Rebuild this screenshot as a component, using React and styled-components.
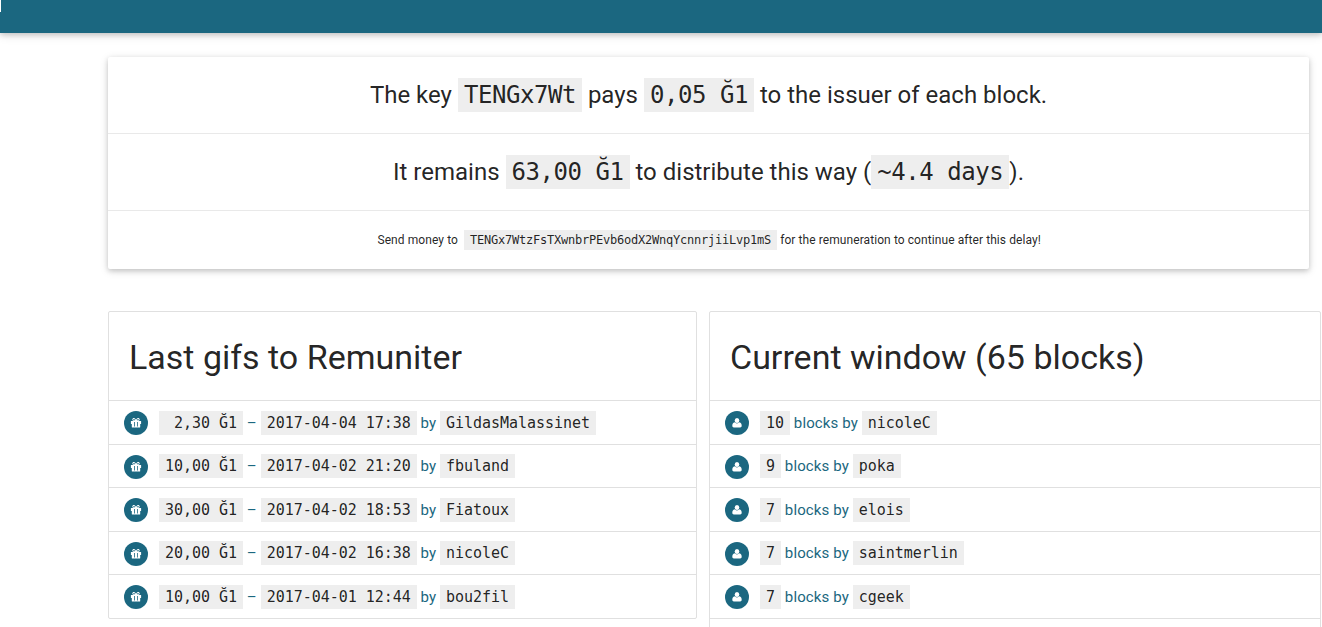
import React from "react";
import styled, { createGlobalStyle } from "styled-components";

const TEAL = "#1b6780";
const SHADOW = "0 2px 5px 0 rgba(0,0,0,0.16), 0 2px 10px 0 rgba(0,0,0,0.12)";

const GlobalStyle = createGlobalStyle`
  *, *::before, *::after { box-sizing: border-box; }
  html { background: #fff; }
  body {
    margin: 0;
    font: 15px/1.5 Roboto, sans-serif;
    color: rgba(0,0,0,0.87);
  }
`;

const Page = styled.div`
  width: 1322px;
  height: 627px;
  overflow: hidden;
`;

const Nav = styled.header`
  height: 33px;
  background: ${TEAL};
  box-shadow: ${SHADOW};
`;

const NavEdge = styled.div`
  width: 1px;
  height: 12px;
  background: #fff;
`;

const Main = styled.main`
  padding: 24px 0 0 108px;
`;

const Summary = styled.section`
  width: 1201px;
  border-radius: 2px;
  box-shadow: ${SHADOW};
  text-align: center;
`;

const Code = styled.code`
  padding: 3px 6px;
  background: #eee;
  color: rgba(0,0,0,0.87);
  font-family: "DejaVu Sans Mono", monospace;
  font-size: inherit;
  letter-spacing: -0.031px;
  white-space: pre;
`;

const SummaryLine = styled.p`
  margin: 0;
  padding: ${(p) => (p.$small ? "20px 20px 20px 21.4px" : "20px")};
  font-size: ${(p) => (p.$small ? 12 : 24)}px;
  line-height: ${(p) => (p.$small ? 18 : 36)}px;
  letter-spacing: ${(p) => (p.$small ? "0.08px" : "normal")};
  & + & { border-top: 1px solid #e9e9e9; }
  ${Code} { letter-spacing: ${(p) => (p.$small ? "-0.224px" : "-0.449px")}; }
`;

const Columns = styled.div`
  display: grid;
  grid-template-columns: 589px 612px;
  gap: 12px;
  align-items: start;
  margin-top: 42px;
`;

const Collection = styled.section`
  border: 1px solid #e0e0e0;
  border-radius: 2px;
`;

const CollectionTitle = styled.h4`
  margin: 0;
  padding: 26px 20px 0;
  font-size: 34px;
  font-weight: 400;
  line-height: 38px;
  height: 89px;
  border-bottom: 1px solid #e0e0e0;
`;

const Item = styled.div`
  display: flex;
  align-items: flex-start;
  height: 43.5px;
  padding: 10px 15px;
  color: ${TEAL};
  border-bottom: 1px solid #e0e0e0;
  &:last-child { border-bottom: 0; height: 42.5px; }
`;

const ItemText = styled.span`
  padding-top: 0.7px;
  letter-spacing: 0.12px;
`;

const Badge = styled.span`
  flex: none;
  display: flex;
  align-items: center;
  justify-content: center;
  width: 24px;
  height: 24px;
  margin-right: 11px;
  border-radius: 50%;
  background: ${TEAL};
`;

const Glyph = styled.svg`
  display: block;
  fill: #fff;
`;

const GiftIcon = () => (
  <Badge>
    <Glyph width="12" height="10" viewBox="0 0 12 10">
      <path
        fillRule="evenodd"
        d="M.9 3h3C2.900 3 2.300 2.400 2.300 1.600 2.300.7 3 .1 3.900.1c.6 0 1 .2 1.300.6L6 1.700l.8-1C7.100.3 7.500.1 8.100.1 9 .1 9.700.7 9.700 1.600 9.700 2.400 9.100 3 8.100 3h3v3h-.9v3c0 .3-.2.6-.6.6H2.400c-.4 0-.6-.3-.6-.6V6H.9zM3.900.9c-.4 0-.7.3-.7.7s.3.7.7.7h1.200L4.500 1.300C4.300 1 4.200.9 3.900.9zM8.100.9c-.3 0-.4.1-.6.4l-.6 1h1.200c.4 0 .7-.3.7-.7S8.500.9 8.100.9zM4.200 4H5v4.400h-.8zM7 4h.8v4.400H7z"
      />
    </Glyph>
  </Badge>
);

const UserIcon = () => (
  <Badge>
    <Glyph width="10" height="10" viewBox="0 0 10 10">
      <ellipse cx="5" cy="2.500" rx="2.300" ry="2.500" />
      <path d="M2.600 4.300C1 4.600.3 6 .3 7.700c0 1 .7 1.700 1.500 1.700h6.400c.8 0 1.500-.7 1.500-1.700C9.700 6 9 4.600 7.400 4.300 6.700 5.100 6 5.400 5 5.400S3.300 5.100 2.600 4.300z" />
    </Glyph>
  </Badge>
);

const gifts = [
  ["\u00a02,30 Ğ1", "2017-04-04 17:38", "GildasMalassinet"],
  ["10,00 Ğ1", "2017-04-02 21:20", "fbuland"],
  ["30,00 Ğ1", "2017-04-02 18:53", "Fiatoux"],
  ["20,00 Ğ1", "2017-04-02 16:38", "nicoleC"],
  ["10,00 Ğ1", "2017-04-01 12:44", "bou2fil"],
];

const issuers = [
  ["10", "nicoleC"],
  ["9", "poka"],
  ["7", "elois"],
  ["7", "saintmerlin"],
  ["7", "cgeek"],
];

export default function App() {
  return (
    <Page>
      <GlobalStyle />
      <Nav>
        <NavEdge />
      </Nav>
      <Main>
        <Summary>
          <SummaryLine>
            The key <Code>TENGx7Wt</Code> pays <Code>0,05 Ğ1</Code> to the issuer of each block.
          </SummaryLine>
          <SummaryLine>
            It remains <Code>63,00 Ğ1</Code> to distribute this way (<Code>~4.4 days</Code>).
          </SummaryLine>
          <SummaryLine $small>
            Send money to{"\u00a0 "}
            <Code>TENGx7WtzFsTXwnbrPEvb6odX2WnqYcnnrjiiLvp1mS</Code> for the remuneration to continue
            after this delay!
          </SummaryLine>
        </Summary>
        <Columns>
          <Collection>
            <CollectionTitle>Last gifs to Remuniter</CollectionTitle>
            {gifts.map(([amount, date, name]) => (
              <Item key={date}>
                <GiftIcon />
                <ItemText>
                  <Code>{amount}</Code> – <Code>{date}</Code> by <Code>{name}</Code>
                </ItemText>
              </Item>
            ))}
          </Collection>
          <Collection>
            <CollectionTitle>Current window (65 blocks)</CollectionTitle>
            {issuers.map(([count, name]) => (
              <Item key={name}>
                <UserIcon />
                <ItemText>
                  <Code>{count}</Code> blocks by <Code>{name}</Code>
                </ItemText>
              </Item>
            ))}
            <Item />
          </Collection>
        </Columns>
      </Main>
    </Page>
  );
}
